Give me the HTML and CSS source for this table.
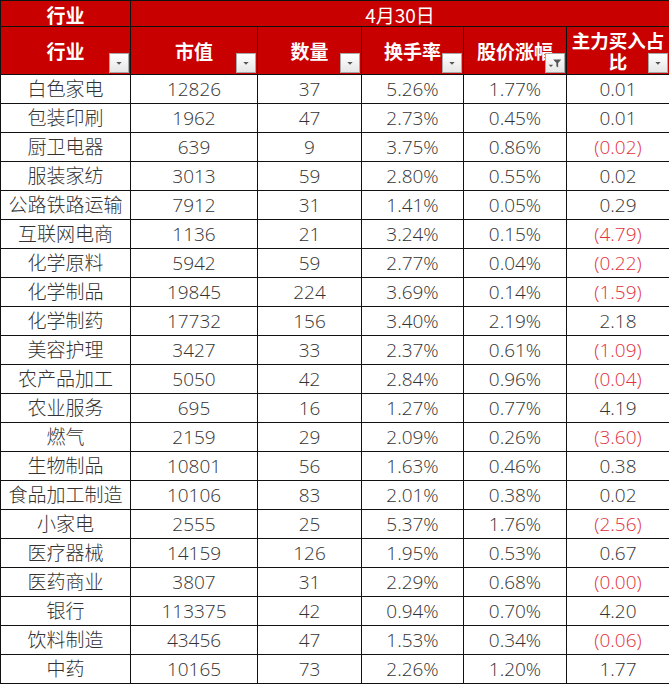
FILE: index.html
```html
<!DOCTYPE html>
<html lang="zh-CN">
<head>
<meta charset="utf-8">
<title>行业</title>
<link rel="stylesheet" href="styles.css">
</head>
<body>
<table class="sheet">
  <colgroup>
    <col class="c1"><col class="c2"><col class="c3"><col class="c4"><col class="c5"><col class="c6">
  </colgroup>
  <thead>
    <tr class="h1">
      <th>行业</th>
      <th colspan="5" class="date">4月30日</th>
    </tr>
    <tr class="h2">
      <th>行业<span class="fb"><svg viewBox="0 0 20 20"><path d="M7 9h6l-3 3z" fill="#555"/></svg></span></th>
      <th>市值<span class="fb"><svg viewBox="0 0 20 20"><path d="M7 9h6l-3 3z" fill="#555"/></svg></span></th>
      <th>数量<span class="fb"><svg viewBox="0 0 20 20"><path d="M7 9h6l-3 3z" fill="#555"/></svg></span></th>
      <th>换手率<span class="fb"><svg viewBox="0 0 20 20"><path d="M7 9h6l-3 3z" fill="#555"/></svg></span></th>
      <th>股价涨幅<span class="fb"><svg viewBox="0 0 20 20"><path d="M8 6h9l-3.5 4v5l-2-1.5v-3.5z" fill="#555"/><path d="M3 12h5l-2.5 2.5z" fill="#555"/></svg></span></th>
      <th class="wrap">主力买入占比<span class="fb"><svg viewBox="0 0 20 20"><path d="M7 9h6l-3 3z" fill="#555"/></svg></span></th>
    </tr>
  </thead>
  <tbody>
    <tr><td>白色家电</td><td>12826</td><td>37</td><td>5.26%</td><td>1.77%</td><td>0.01</td></tr>
    <tr><td>包装印刷</td><td>1962</td><td>47</td><td>2.73%</td><td>0.45%</td><td>0.01</td></tr>
    <tr><td>厨卫电器</td><td>639</td><td>9</td><td>3.75%</td><td>0.86%</td><td class="neg">(0.02)</td></tr>
    <tr><td>服装家纺</td><td>3013</td><td>59</td><td>2.80%</td><td>0.55%</td><td>0.02</td></tr>
    <tr><td>公路铁路运输</td><td>7912</td><td>31</td><td>1.41%</td><td>0.05%</td><td>0.29</td></tr>
    <tr><td>互联网电商</td><td>1136</td><td>21</td><td>3.24%</td><td>0.15%</td><td class="neg">(4.79)</td></tr>
    <tr><td>化学原料</td><td>5942</td><td>59</td><td>2.77%</td><td>0.04%</td><td class="neg">(0.22)</td></tr>
    <tr><td>化学制品</td><td>19845</td><td>224</td><td>3.69%</td><td>0.14%</td><td class="neg">(1.59)</td></tr>
    <tr><td>化学制药</td><td>17732</td><td>156</td><td>3.40%</td><td>2.19%</td><td>2.18</td></tr>
    <tr><td>美容护理</td><td>3427</td><td>33</td><td>2.37%</td><td>0.61%</td><td class="neg">(1.09)</td></tr>
    <tr><td>农产品加工</td><td>5050</td><td>42</td><td>2.84%</td><td>0.96%</td><td class="neg">(0.04)</td></tr>
    <tr><td>农业服务</td><td>695</td><td>16</td><td>1.27%</td><td>0.77%</td><td>4.19</td></tr>
    <tr><td>燃气</td><td>2159</td><td>29</td><td>2.09%</td><td>0.26%</td><td class="neg">(3.60)</td></tr>
    <tr><td>生物制品</td><td>10801</td><td>56</td><td>1.63%</td><td>0.46%</td><td>0.38</td></tr>
    <tr><td>食品加工制造</td><td>10106</td><td>83</td><td>2.01%</td><td>0.38%</td><td>0.02</td></tr>
    <tr><td>小家电</td><td>2555</td><td>25</td><td>5.37%</td><td>1.76%</td><td class="neg">(2.56)</td></tr>
    <tr><td>医疗器械</td><td>14159</td><td>126</td><td>1.95%</td><td>0.53%</td><td>0.67</td></tr>
    <tr><td>医药商业</td><td>3807</td><td>31</td><td>2.29%</td><td>0.68%</td><td class="neg">(0.00)</td></tr>
    <tr><td>银行</td><td>113375</td><td>42</td><td>0.94%</td><td>0.70%</td><td>4.20</td></tr>
    <tr><td>饮料制造</td><td>43456</td><td>47</td><td>1.53%</td><td>0.34%</td><td class="neg">(0.06)</td></tr>
    <tr><td>中药</td><td>10165</td><td>73</td><td>2.26%</td><td>1.20%</td><td>1.77</td></tr>
  </tbody>
</table>
</body>
</html>
```

FILE: styles.css
```css
html, body {
  margin: 0;
  padding: 0;
  background: #ffffff;
}

.sheet {
  border-collapse: collapse;
  table-layout: fixed;
  width: 669px;
  font-family: "Open Sans", "Noto Sans CJK SC", sans-serif;
  font-weight: 300;
  color: #333333;
}

.c1 { width: 130px; }
.c2 { width: 127px; }
.c3 { width: 104px; }
.c4 { width: 102px; }
.c5 { width: 103px; }
.c6 { width: 103px; }

.sheet th,
.sheet td {
  border: 1px solid #111111;
  padding: 0;
  text-align: center;
  vertical-align: middle;
  overflow: hidden;
  white-space: nowrap;
}

.sheet th {
  background: #c80000;
  color: #ffffff;
  font-family: "Noto Sans CJK SC", sans-serif;
  font-weight: 700;
  font-size: 19px;
  position: relative;
}

.h1 th {
  height: 22px;
  line-height: 22px;
  padding-top: 3px;
}

.h1 th.date {
  font-weight: 400;
}

.h2 th {
  height: 47px;
  line-height: 22px;
}

.h2 th.wrap {
  white-space: normal;
  line-height: 21px;
  font-size: 18.5px;
}

.sheet td {
  height: 28px;
  font-size: 19px;
  line-height: 28px;
}

.sheet td.neg {
  color: #e3303c;
}

.fb {
  position: absolute;
  right: 1px;
  bottom: 1px;
  width: 18px;
  height: 18px;
  border: 1px solid #a8a8a8;
  background: linear-gradient(#ffffff, #e6e6e6);
  display: block;
}

.fb svg {
  display: block;
  width: 18px;
  height: 18px;
}
```
